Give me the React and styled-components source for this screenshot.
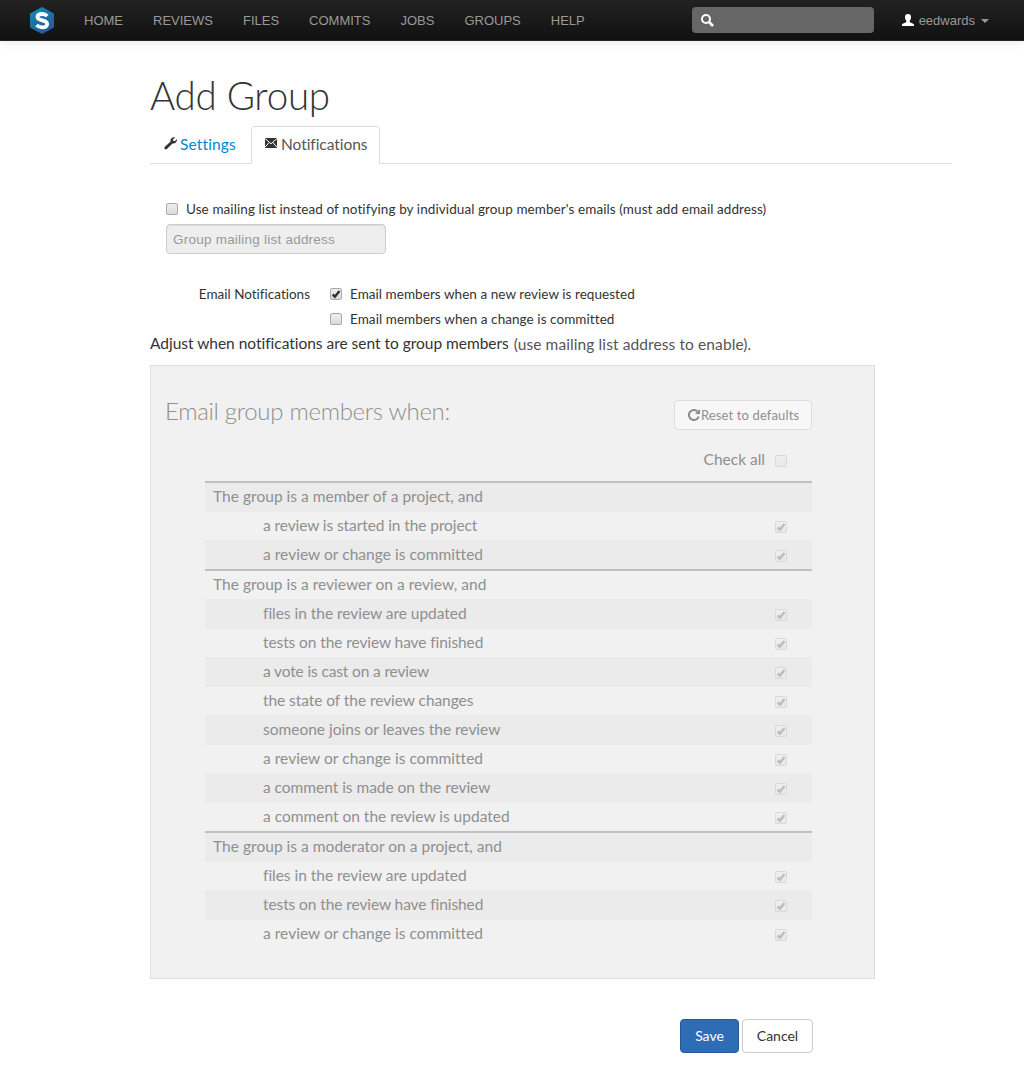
import React from 'react';
import styled, { createGlobalStyle, css } from 'styled-components';

const Global = createGlobalStyle`
  * { box-sizing: border-box; }
  body {
    margin: 0;
    background: #fff;
    color: #333;
    font: 15.5px/20px Lato, "Liberation Sans", sans-serif;
    font-variant-ligatures: none;
  }
  svg { display: block; }
`;

const Navbar = styled.header`
  display: flex;
  align-items: center;
  height: 41px;
  padding: 0 35px 0 30px;
  border-bottom: 1px solid #252525;
  background: linear-gradient(#222, #111);
  box-shadow: 0 1px 10px rgba(0, 0, 0, 0.1);
  font: 13px/20px "Liberation Sans", Arial, sans-serif;
  color: #999;
`;
const Menu = styled.nav`
  display: flex;
  gap: 30px;
  margin-left: 30px;
  padding-top: 2px;
`;
const MenuLink = styled.a`
  color: #999;
`;
const Search = styled.div`
  display: flex;
  align-items: center;
  width: 182px;
  height: 26px;
  margin-left: auto;
  padding-left: 9px;
  border-radius: 4px;
  background: #666;
`;
const User = styled.div`
  display: flex;
  align-items: center;
  margin-left: 28px;
`;
const UserName = styled.span`
  margin: 0 6px 0 5px;
  padding-top: 2px;
`;
const Caret = styled.i`
  margin-top: 2px;
  border: 4px solid transparent;
  border-top-color: #999;
  border-bottom: 0;
`;

const Page = styled.main`
  width: 802px;
  margin: 34px 0 0 150px;
`;
const Title = styled.h1`
  margin: 0;
  height: 51px;
  font-size: 38.5px;
  font-weight: 300;
  line-height: 40px;
  letter-spacing: ${(p) => p.$spacing}px;
`;
const Tabs = styled.div`
  display: flex;
  height: 38px;
  border-bottom: 1px solid #ddd;
`;
const Tab = styled.a`
  display: flex;
  gap: ${(p) => (p.$active ? 4 : 3)}px;
  width: ${(p) => p.$width}px;
  height: 38px;
  padding: 7px 0 0 13px;
  border: 1px solid transparent;
  border-radius: 4px 4px 0 0;
  color: #0088cc;
  letter-spacing: ${(p) => p.$spacing || 0}px;
  ${(p) =>
    p.$active &&
    css`
      border-color: #ddd #ddd #fff;
      background: #fff;
      color: #555;
    `}
  svg { flex: none; margin-top: 3px; }
`;

const Check = styled.span`
  display: block;
  flex: none;
  width: 12px;
  height: 12px;
  border: 1px solid ${(p) => (p.$disabled ? '#d9d9d9' : '#a9a9a9')};
  border-radius: 2px;
  background: ${(p) => (p.$disabled ? 'linear-gradient(#efefef, #e8e8e8)' : 'linear-gradient(#eee, #dcdcdc)')};
  color: ${(p) => (p.$disabled ? '#bdbdbd' : '#333')};
`;
const Line = styled.label`
  display: flex;
  align-items: center;
  gap: 8px;
  height: 20px;
  font-size: 13.5px;
  letter-spacing: ${(p) => p.$spacing || 0}px;
  white-space: nowrap;
`;
const MailingList = styled.section`
  padding: 35px 0 0 16px;
`;
const Address = styled.input`
  display: block;
  width: 220px;
  height: 30px;
  margin-top: 5px;
  padding: 4px 6px;
  border: 1px solid #ccc;
  border-radius: 4px;
  background: #eee;
  box-shadow: inset 0 1px 1px rgba(0, 0, 0, 0.075);
  font: 13.5px/20px "Liberation Sans", Arial, sans-serif;
  letter-spacing: 0.23px;
  &::placeholder { color: #999; }
`;
const EmailOptions = styled.section`
  display: grid;
  grid-template-columns: 160px 1fr;
  column-gap: 20px;
  margin-top: 30px;
`;
const OptionsLabel = styled.div`
  font-size: 13.5px;
  text-align: right;
`;
const Options = styled.div`
  display: flex;
  flex-direction: column;
  gap: 5px;
`;
const Intro = styled.p`
  display: flex;
  gap: 5px;
  margin: 4px 0 11px;
  letter-spacing: ${(p) => p.$spacing || 0}px;
  white-space: nowrap;
`;
const Hint = styled.span`
  color: #555;
  margin-top: 1px;
  letter-spacing: ${(p) => p.$spacing || 0}px;
`;

const Panel = styled.section`
  width: 725px;
  height: 614px;
  padding: 34px 62px 0 14px;
  border: 1px solid #dddde2;
  background: #f1f1f1;
  color: #8f8f8f;
`;
const PanelHead = styled.div`
  display: flex;
  justify-content: space-between;
`;
const PanelTitle = styled.h2`
  margin: 0;
  font-size: 24px;
  font-weight: 300;
  line-height: 22px;
  letter-spacing: ${(p) => p.$spacing}px;
`;
const Reset = styled.button`
  display: flex;
  align-items: center;
  gap: 1px;
  width: 138px;
  height: 30px;
  padding: 0 0 0 13px;
  border: 1px solid #ddd;
  border-radius: 4px;
  background: #f7f7f7;
  color: #8f8f8f;
  font: 13px/20px Lato, sans-serif;
  letter-spacing: ${(p) => p.$spacing || 0}px;
  white-space: nowrap;
`;
const CheckAll = styled.div`
  display: flex;
  justify-content: flex-end;
  gap: 10px;
  height: 20px;
  margin: 19px 25px 12px 0;
  ${Check} { margin-top: 6px; }
`;
const Table = styled.div`
  margin-left: 40px;
`;
const Row = styled.div`
  display: flex;
  justify-content: space-between;
  height: ${(p) => (p.$head ? 30 : 29)}px;
  padding: 3px 25px 0 ${(p) => (p.$head ? 8 : 58)}px;
  border-top: ${(p) => (p.$head ? '2px solid #c0c0c0' : '1px solid #ebebeb')};
  background: ${(p) => (p.$striped ? '#ebebeb' : 'transparent')};
  ${Check} { margin-top: 6px; }
`;
const Label = styled.span`
  letter-spacing: ${(p) => p.$spacing || 0}px;
  white-space: nowrap;
`;
const Actions = styled.div`
  display: flex;
  justify-content: flex-end;
  gap: 3px;
  width: 663px;
  margin-top: 40px;
`;
const Button = styled.button`
  width: ${(p) => p.$width}px;
  height: 34px;
  padding: 0;
  border: 1px solid ${(p) => (p.$primary ? '#285a96' : '#ccc')};
  border-radius: 4px;
  background: ${(p) => (p.$primary ? '#2e6db5' : '#fff')};
  color: ${(p) => (p.$primary ? '#fff' : '#333')};
  font: 14px/20px Lato, sans-serif;
`;

const Logo = () => (
  <svg width="24" height="27" viewBox="0 0 24 27">
    <defs>
      <linearGradient id="hex" x1="0" y1="0" x2="0.5" y2="1">
        <stop offset="0" stopColor="#148bb8" />
        <stop offset="1" stopColor="#245c99" />
      </linearGradient>
    </defs>
    <path d="M12 0 24 6.6V20.4L12 27 0 20.4V6.6Z" fill="url(#hex)" />
    <path d="M17.3 9C15.8 7.5 14 7 12.2 7 9.4 7 7.5 8.1 7.5 10.1 7.500 14.8 17.1 11.9 17.1 16.9 17.1 19.3 14.8 20.3 12 20.3 9.9 20.3 8 19.500 6.5 18" fill="none" stroke="#fff" strokeWidth="3.8" />
  </svg>
);
const SearchIcon = () => (
  <svg width="13" height="13" viewBox="0 0 13 13" fill="none" stroke="#fff">
    <circle cx="5" cy="5" r="4" strokeWidth="2" />
    <path d="m8 8 4 4" strokeWidth="2.6" />
  </svg>
);
const UserIcon = () => (
  <svg width="12" height="12" viewBox="0 0 12 12" fill="#fff">
    <path d="M6 0C3.9 0 3 1.2 3 3c0 1.7.5 2.9 1.3 3.7v1.3C4 9 0 9 0 11V12h12v-1C12 9 8 9 7.7 8V6.7C8.5 5.9 9 4.7 9 3 9 1.2 8.1 0 6 0Z" />
  </svg>
);
const Wrench = () => (
  <svg width="13" height="13" viewBox="0 0 13 13" fill="#333">
    <path d="M11.3.3 9 2.6 9.3 3.9 10.7 4.2 13 2C13.2 5.3 10.8 7.2 8.5 6.4L2.9 12C1.5 13.2-.4 11.5.7 10.1L6.6 4.5C5.9 1.7 8.3-.4 11.3.3Z" />
  </svg>
);
const Envelope = () => (
  <svg width="12" height="12" viewBox="0 0 12 12">
    <path d="M0 1h12v10H0Z" fill="#333" />
    <path d="m0 1.5 6 5.3 6-5.3M0 10.3l4-4.7m8 4.7L8 5.6" fill="none" stroke="#fff" strokeWidth="1" />
  </svg>
);
const Refresh = () => (
  <svg width="12" height="12" viewBox="0 0 12 12">
    <path d="M9.6 2.6A5 5 0 1 0 10.7 7.5" fill="none" stroke="#8a8a8a" strokeWidth="2" />
    <path d="M12 0v5H7Z" fill="#8a8a8a" />
  </svg>
);
const Tick = () => (
  <svg width="10" height="10" viewBox="0 0 10 10">
    <path d="m1.7 5.5 2.2 2.2L8.5 2" fill="none" stroke="currentColor" strokeWidth="2.5" />
  </svg>
);
const Checkbox = ({ checked, disabled }) => (
  <Check role="checkbox" aria-checked={!!checked} $disabled={disabled}>
    {checked && <Tick />}
  </Check>
);

const menu = ['HOME', 'REVIEWS', 'FILES', 'COMMITS', 'JOBS', 'GROUPS', 'HELP'];
const groups = [
  ['The group is a member of a project, and', 0.03, [
    ['a review is started in the project', -0.09],
    ['a review or change is committed', 0.04],
  ]],
  ['The group is a reviewer on a review, and', 0.02, [
    ['files in the review are updated', -0.03],
    ['tests on the review have finished', -0.09],
    ['a vote is cast on a review', -0.14],
    ['the state of the review changes', -0.06],
    ['someone joins or leaves the review', 0],
    ['a review or change is committed', 0.04],
    ['a comment is made on the review', -0.03],
    ['a comment on the review is updated', 0],
  ]],
  ['The group is a moderator on a project, and', 0.03, [
    ['files in the review are updated', -0.03],
    ['tests on the review have finished', -0.09],
    ['a review or change is committed', 0.04],
  ]],
];
const rows = groups.flatMap(([title, spacing, items]) => [
  { text: title, spacing, head: true },
  ...items.map(([text, gap]) => ({ text, spacing: gap })),
]);

export default function App() {
  return (
    <>
      <Global />
      <Navbar>
        <Logo />
        <Menu>{menu.map((m) => <MenuLink key={m}>{m}</MenuLink>)}</Menu>
        <Search><SearchIcon /></Search>
        <User><UserIcon /><UserName>eedwards</UserName><Caret /></User>
      </Navbar>
      <Page>
        <Title $spacing={-0.25}>Add Group</Title>
        <Tabs>
          <Tab $width={101} $spacing={0.15}><Wrench />Settings</Tab>
          <Tab $width={129} $spacing={-0.05} $active><Envelope />Notifications</Tab>
        </Tabs>
        <MailingList>
          <Line $spacing={0.085}><Checkbox />Use mailing list instead of notifying by individual group member's emails (must add email address)</Line>
          <Address placeholder="Group mailing list address" disabled />
        </MailingList>
        <EmailOptions>
          <OptionsLabel>Email Notifications</OptionsLabel>
          <Options>
            <Line $spacing={0.05}><Checkbox checked />Email members when a new review is requested</Line>
            <Line $spacing={0.07}><Checkbox />Email members when a change is committed</Line>
          </Options>
        </EmailOptions>
        <Intro $spacing={-0.02}>Adjust when notifications are sent to group members<Hint $spacing={0.1}>(use mailing list address to enable).</Hint></Intro>
        <Panel>
          <PanelHead>
            <PanelTitle $spacing={-0.3}>Email group members when:</PanelTitle>
            <Reset $spacing={0.13}><Refresh />Reset to defaults</Reset>
          </PanelHead>
          <CheckAll>Check all<Checkbox disabled /></CheckAll>
          <Table>
            {rows.map((r, i) => (
              <Row key={i} $head={r.head} $striped={i % 2 === 0}>
                <Label $spacing={r.spacing}>{r.text}</Label>
                {!r.head && <Checkbox checked disabled />}
              </Row>
            ))}
          </Table>
        </Panel>
        <Actions>
          <Button $primary $width={59}>Save</Button>
          <Button $width={71}>Cancel</Button>
        </Actions>
      </Page>
    </>
  );
}
